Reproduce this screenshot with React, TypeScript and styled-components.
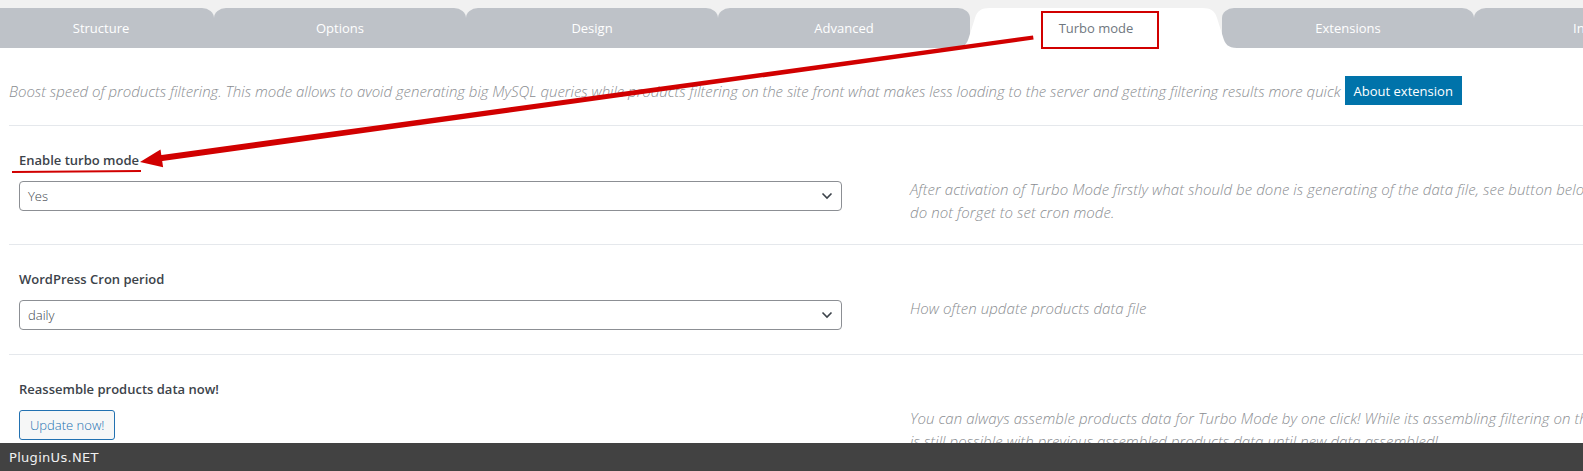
import React from 'react';
import styled, { createGlobalStyle } from 'styled-components';

const GlobalStyle = createGlobalStyle`
  html, body {
    margin: 0;
    padding: 0;
    background: #ffffff;
    font-family: "Open Sans", "Liberation Sans", sans-serif;
    overflow: hidden;
  }
`;

const Page = styled.div`
  position: relative;
  width: 1583px;
  height: 471px;
  overflow: hidden;
  background: #ffffff;
`;

const TabBar = styled.div`
  display: flex;
  align-items: flex-end;
  height: 48px;
  padding-top: 8px;
  box-sizing: border-box;
  background: #f1f1f1;
  white-space: nowrap;
`;

const Tab = styled.div<{ $w: number; $first?: boolean }>`
  position: relative;
  flex: 0 0 ${(p) => p.$w}px;
  margin-left: ${(p) => (p.$first ? '-12px' : '0')};
  height: 40px;
  display: flex;
  align-items: center;
  justify-content: center;
  background: #bec2c8;
  border-radius: 12px 12px 0 0 / 10px 10px 0 0;
  color: #ffffff;
  font-size: 13px;
  z-index: 1;
`;

const ActiveTab = styled.div`
  position: relative;
  flex: 0 0 282px;
  margin: 0 -15px;
  height: 40px;
  display: flex;
  align-items: center;
  justify-content: center;
  background: #ffffff;
  color: #6f7780;
  font-size: 13px;
  z-index: 2;
  clip-path: path('M0,40 C9,40 12,36 14,29 L20,10 C22,3 26,0 35,0 L247,0 C256,0 260,3 262,10 L268,29 C270,36 273,40 282,40 Z');
`;

const Content = styled.div`
  padding-left: 9px;
`;

const Intro = styled.div`
  display: flex;
  align-items: center;
  gap: 4px;
  padding: 28px 0 20px;
  white-space: nowrap;
`;

const IntroText = styled.span`
  font-size: 15px;
  font-style: italic;
  font-weight: 300;
  letter-spacing: -0.02px;
  color: #8a8d91;
`;

const PrimaryButton = styled.button`
  height: 29px;
  padding: 0 9px;
  border: none;
  border-radius: 0;
  background: #0073aa;
  color: #ffffff;
  font-family: inherit;
  font-size: 13px;
`;

const Section = styled.div<{ $pb: number }>`
  border-top: 1px solid #e5e8ec;
  padding: 25px 10px ${(p) => p.$pb}px;
`;

const Label = styled.div`
  font-size: 13px;
  font-weight: 600;
  line-height: 18px;
  color: #3c434a;
`;

const Row = styled.div`
  display: flex;
  align-items: flex-start;
  margin-top: 12px;
`;

const Control = styled.div`
  flex: 0 0 823px;
`;

const SelectBox = styled.div`
  height: 30px;
  box-sizing: border-box;
  border: 1px solid #8c8f94;
  border-radius: 4px;
  display: flex;
  align-items: center;
  justify-content: space-between;
  padding: 0 8px 0 8px;
  font-size: 13px;
  font-weight: 300;
  color: #3c434a;
  background: #ffffff;
`;

const SecondaryButton = styled.button`
  height: 30px;
  padding: 0 10px;
  border: 1px solid #2271b1;
  border-radius: 3px;
  background: #f6f7f7;
  color: #2271b1;
  font-family: inherit;
  font-size: 13px;
  font-weight: 300;
`;

const Help = styled.div`
  margin-left: 68px;
  margin-top: -3px;
  font-size: 15px;
  font-style: italic;
  font-weight: 300;
  letter-spacing: 0.07px;
  line-height: 23px;
  color: #8a8d91;
  white-space: nowrap;
`;

const Footer = styled.div`
  position: absolute;
  left: 0;
  right: 0;
  bottom: 0;
  height: 28px;
  display: flex;
  align-items: center;
  padding-left: 9px;
  background: #424242;
  color: #f0f0f0;
  font-family: "DejaVu Sans", sans-serif;
  font-size: 13px;
  letter-spacing: 0.3px;
  z-index: 5;
`;

const Annotation = styled.svg`
  position: absolute;
  top: 0;
  left: 0;
  pointer-events: none;
  z-index: 10;
`;

const Chevron = () => (
  <svg width="12" height="8" viewBox="0 0 12 8">
    <path d="M1.5 1.5 L6 6 L10.5 1.5" fill="none" stroke="#3c434a" strokeWidth="1.6" />
  </svg>
);

const tabs = [
  { title: 'Structure', w: 226 },
  { title: 'Options', w: 252 },
  { title: 'Design', w: 252 },
  { title: 'Advanced', w: 252 },
  { title: 'Turbo mode', w: 252, active: true },
  { title: 'Extensions', w: 252 },
  { title: 'Info', w: 222 },
];

export default function App() {
  return (
    <>
      <GlobalStyle />
      <Page>
        <TabBar>
          {tabs.map((t, i) =>
            t.active ? (
              <ActiveTab key={t.title}>{t.title}</ActiveTab>
            ) : (
              <Tab key={t.title} $w={t.w} $first={i === 0}>
                {t.title}
              </Tab>
            )
          )}
        </TabBar>

        <Content>
          <Intro>
            <IntroText>
              Boost speed of products filtering. This mode allows to avoid generating big MySQL queries while products filtering on the site front what makes less loading to the server and getting filtering results more quick
            </IntroText>
            <PrimaryButton>About extension</PrimaryButton>
          </Intro>

          <Section $pb={20}>
            <Label>Enable turbo mode</Label>
            <Row>
              <Control>
                <SelectBox>
                  <span>Yes</span>
                  <Chevron />
                </SelectBox>
              </Control>
              <Help>
                After activation of Turbo Mode firstly what should be done is generating of the data file, see button below, and also
                <br />
                do not forget to set cron mode.
              </Help>
            </Row>
          </Section>

          <Section $pb={24}>
            <Label>WordPress Cron period</Label>
            <Row>
              <Control>
                <SelectBox>
                  <span>daily</span>
                  <Chevron />
                </SelectBox>
              </Control>
              <Help>How often update products data file</Help>
            </Row>
          </Section>

          <Section $pb={25}>
            <Label>Reassemble products data now!</Label>
            <Row>
              <Control>
                <SecondaryButton>Update now!</SecondaryButton>
              </Control>
              <Help>
                You can always assemble products data for Turbo Mode by one click! While its assembling filtering on the site front
                <br />
                is still possible with previous assembled products data until new data assembled!
              </Help>
            </Row>
          </Section>
        </Content>

        <Footer>PluginUs.NET</Footer>

        <Annotation width="1583" height="471" viewBox="0 0 1583 471">
          <rect x="1042" y="12" width="116" height="36" fill="none" stroke="#d10000" strokeWidth="2" />
          <polygon points="1033,35.5 1033.6,39.5 159,161.5 158,155.5" fill="#d10000" />
          <polygon points="140,162 160.5,149.5 163.1,167.3" fill="#d10000" />
          <line x1="12" y1="172" x2="141" y2="171" stroke="#d10000" strokeWidth="2" />
        </Annotation>
      </Page>
    </>
  );
}
